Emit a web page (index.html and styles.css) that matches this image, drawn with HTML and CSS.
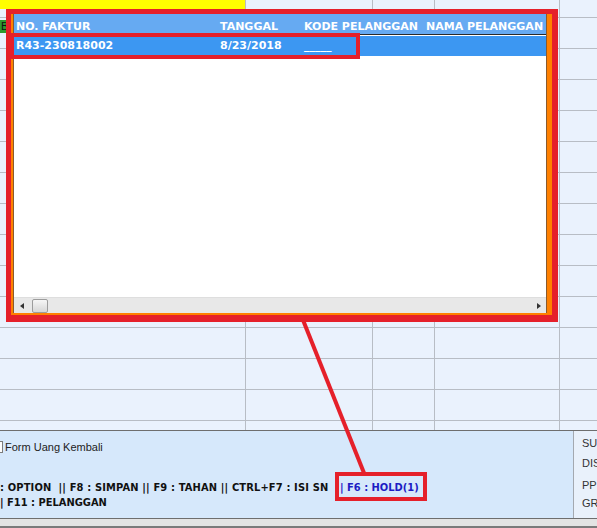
FILE: index.html
```html
<!DOCTYPE html>
<html>
<head>
<meta charset="utf-8">
<link rel="stylesheet" href="styles.css">
</head>
<body>
<div class="screen">
  <div class="sheet">
    <div class="yellow"></div><div></div><div></div><div></div><div></div>
    <div><span class="green-tag">Ba</span></div><div></div><div></div><div></div><div></div>
    <div></div><div></div><div></div><div></div><div></div>
    <div></div><div></div><div></div><div></div><div></div>
    <div></div><div></div><div></div><div></div><div></div>
    <div></div><div></div><div></div><div></div><div></div>
    <div></div><div></div><div></div><div></div><div></div>
    <div></div><div></div><div></div><div></div><div></div>
    <div></div><div></div><div></div><div></div><div></div>
    <div></div><div></div><div></div><div></div><div></div>
    <div></div><div></div><div></div><div></div><div></div>
    <div></div><div></div><div></div><div></div><div></div>
    <div></div><div></div><div></div><div></div><div></div>
    <div></div><div></div><div></div><div></div><div></div>
    <div></div><div></div><div></div><div></div><div></div>
  </div>

  <div class="panel">
    <div class="panel-main">
      <div class="check-row"><span class="check"></span><span class="check-label">Form Uang Kembali</span></div>
      <div class="keys-line"><span class="keys-main">: OPTION  || F8 : SIMPAN || F9 : TAHAN || CTRL+F7 : ISI SN</span><span class="hold">| F6 : HOLD(1)</span></div>
      <div class="keys-line">| F11 : PELANGGAN</div>
    </div>
    <div class="panel-side">
      <div class="side-item s1">SUBTOTAL</div>
      <div class="side-item s2">DISKON</div>
      <div class="side-item s3">PPN</div>
      <div class="side-item s4">GRAND TOTAL</div>
    </div>
  </div>
  <div class="statusbar"></div>

  <div class="popup">
    <div class="list">
      <div class="list-inner">
        <div class="lv-row lv-head">
          <div>NO. FAKTUR</div><div>TANGGAL</div><div>KODE PELANGGAN</div><div>NAMA PELANGGAN</div>
        </div>
        <div class="lv-row lv-sel">
          <div>R43-230818002</div><div>8/23/2018</div><div>_____</div><div></div>
        </div>
        <div class="lv-body"></div>
        <div class="hscroll">
          <span class="arrow arrow-left"></span>
          <span class="thumb"></span>
          <span class="track"></span>
          <span class="arrow arrow-right"></span>
        </div>
      </div>
    </div>
  </div>

  <div class="annot annot-row"></div>
  <div class="annot annot-hold"></div>
  <svg class="connector" width="597" height="528" viewBox="0 0 597 528">
    <line x1="303" y1="320" x2="364" y2="473" stroke="#e5202a" stroke-width="4"/>
  </svg>
</div>
</body>
</html>
```

FILE: styles.css
```css
html, body {
  margin: 0;
  padding: 0;
}
body {
  width: 597px;
  height: 528px;
  overflow: hidden;
  background: #eaf2fd;
  font-family: "DejaVu Sans", sans-serif;
  font-size: 11px;
}
.screen {
  position: relative;
  width: 597px;
  height: 528px;
  display: flex;
  flex-direction: column;
  overflow: hidden;
}

/* spreadsheet background */
.sheet {
  height: 430px;
  flex: none;
  display: grid;
  grid-template-columns: 245px 127px 62px 125px 1fr;
  grid-template-rows: 17px repeat(13, 31px) 1fr;
  background: #eaf2fd;
}
.sheet > div {
  box-sizing: border-box;
  border-left: 1px solid #b8bdc5;
  border-top: 1px solid #b8bdc5;
  overflow: hidden;
}
.sheet > div:nth-child(5n+1) { border-left: 0; }
.sheet > div:nth-child(-n+5) { border-top: 0; }
.sheet > .yellow {
  background: linear-gradient(#ffff00 0 9px, #eaf2fd 9px);
}
.green-tag {
  display: block;
  width: 8px;
  height: 13px;
  margin-top: 2px;
  background: #2e9a2e;
  color: #111;
  font-family: "Liberation Sans", sans-serif;
  font-size: 11px;
  line-height: 13px;
  padding-left: 1px;
  overflow: hidden;
  white-space: nowrap;
  box-sizing: border-box;
}

/* bottom panel */
.panel {
  flex: none;
  height: 89px;
  box-sizing: border-box;
  border-top: 1px solid #6e6e6e;
  border-bottom: 1px solid #6e6e6e;
  background: #d6e8fb;
  display: flex;
}
.panel-main {
  flex: 1;
  min-width: 0;
  padding-top: 9px;
  color: #111;
  overflow: hidden;
}
.check-row {
  display: flex;
  align-items: center;
  height: 14px;
  line-height: 14px;
}
.check {
  display: block;
  width: 12px;
  height: 12px;
  margin-left: -9px;
  box-sizing: border-box;
  background: #fdfdfd;
  border: 1px solid #7c7c7c;
}
.check-label {
  margin-left: 2px;
  font-family: "Liberation Sans", sans-serif;
  color: #222;
}
.keys-line {
  font-family: "DejaVu Sans Condensed", "DejaVu Sans", sans-serif;
  font-stretch: condensed;
  font-weight: bold;
  line-height: 15px;
  height: 15px;
  white-space: pre;
}
.keys-main {
  display: inline-block;
  width: 340px;
  letter-spacing: 0.15px;
}
.check-row + .keys-line {
  margin-top: 26px;
}
.hold {
  color: #1c1cc4;
}
.panel-side {
  width: 24px;
  flex: none;
  box-sizing: border-box;
  border-left: 1px solid #a4a9b0;
  background: #e9f1fb;
  padding-left: 8px;
  overflow: hidden;
  white-space: nowrap;
  color: #333;
  font-family: "Liberation Sans", sans-serif;
  display: flex;
  flex-direction: column;
}
.side-item { line-height: 14px; height: 14px; }
.s1 { margin-top: 5px; }
.s2 { margin-top: 6px; }
.s3 { margin-top: 8px; }
.s4 { margin-top: 4px; }

.statusbar {
  flex: 1;
  background: #e3e3e3;
  border-bottom: 2px solid #7a7a7a;
  box-sizing: border-box;
}

/* popup list */
.popup {
  position: absolute;
  left: 6px;
  top: 9px;
  width: 552px;
  height: 313px;
  box-sizing: border-box;
  border-style: solid;
  border-color: #e5202a;
  border-width: 5px 6px 7px 5px;
  display: flex;
}
.list {
  flex: 1;
  display: flex;
  border-style: solid;
  border-color: #ff8000;
  border-width: 0 5px 2px 2px;
}
.list-inner {
  flex: 1;
  display: flex;
  flex-direction: column;
  background: #fff;
  border-style: solid;
  border-color: #8b5a2b;
  border-width: 0 1px 0 1px;
  min-width: 0;
}
.lv-row {
  display: grid;
  grid-template-columns: 204px 84px 122px 1fr;
  height: 20px;
  box-sizing: border-box;
  padding-top: 2px;
  line-height: 16px;
  color: #fff;
  font-weight: bold;
  white-space: nowrap;
}
.lv-row > div {
  padding-left: 2px;
  overflow: hidden;
}
.lv-head {
  background: #66aaf2;
  height: 21px;
  padding-top: 5px;
  border-bottom: 1px solid #2a2a2a;
}
.lv-sel {
  margin-top: 1px;
  background: #3c97f2;
}
.lv-body {
  flex: 1;
}
.hscroll {
  height: 16px;
  display: flex;
  align-items: center;
  background: #e8e8e8;
  border-top: 1px solid #dedede;
  box-sizing: border-box;
}
.arrow {
  width: 0;
  height: 0;
  border-style: solid;
}
.arrow-left {
  margin-left: 6px;
  border-width: 3px 4px 3px 0;
  border-color: transparent #333 transparent transparent;
}
.arrow-right {
  margin-right: 5px;
  border-width: 3px 0 3px 4px;
  border-color: transparent transparent transparent #333;
}
.thumb {
  margin-left: 8px;
  width: 16px;
  height: 14px;
  box-sizing: border-box;
  border: 1px solid #9c9c9c;
  border-radius: 2px;
  background: linear-gradient(#f6f6f6, #d6d6d6);
}
.track { flex: 1; }

/* annotations */
.annot {
  position: absolute;
  box-sizing: border-box;
  border: 4px solid #e5202a;
}
.annot-row {
  left: 10px;
  top: 33px;
  width: 350px;
  height: 26px;
}
.annot-hold {
  left: 335px;
  top: 472px;
  width: 92px;
  height: 29px;
}
.connector {
  position: absolute;
  left: 0;
  top: 0;
  pointer-events: none;
}
```
